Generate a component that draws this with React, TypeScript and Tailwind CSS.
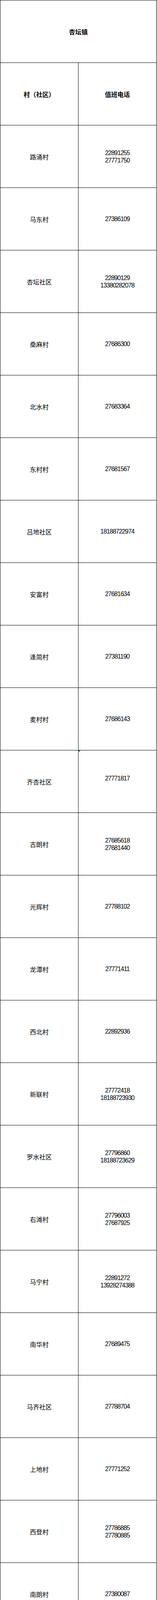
import React from 'react';

interface Row {
  name: string;
  phones: string[];
  flagged?: boolean;
}

const rows: Row[] = [
  { name: '路涌村', phones: ['22891255', '27771750'] },
  { name: '马东村', phones: ['27386109'] },
  { name: '杏坛社区', phones: ['22890129', '13380282078'] },
  { name: '桑麻村', phones: ['27686300'] },
  { name: '北水村', phones: ['27683364'] },
  { name: '东村村', phones: ['27681567'] },
  { name: '吕地社区', phones: ['18188722974'] },
  { name: '安富村', phones: ['27681634'] },
  { name: '逢简村', phones: ['27381190'] },
  { name: '麦村村', phones: ['27686143'] },
  { name: '齐杏社区', phones: ['27771817'], flagged: true },
  { name: '古朗村', phones: ['27685618', '27681440'] },
  { name: '光辉村', phones: ['27788102'] },
  { name: '龙潭村', phones: ['27771411'] },
  { name: '西北村', phones: ['22892936'] },
  { name: '新联村', phones: ['27772418', '18188723930'] },
  { name: '罗水社区', phones: ['27796860', '18188723629'] },
  { name: '右滩村', phones: ['27796003', '27687925'] },
  { name: '马宁村', phones: ['22891272', '13928274388'] },
  { name: '南华村', phones: ['27689475'] },
  { name: '马齐社区', phones: ['27788704'] },
  { name: '上地村', phones: ['27771252'] },
  { name: '西登村', phones: ['27786885', '27780885'] },
  { name: '南朗村', phones: ['27380087'] },
  { name: '雁园社区', phones: ['27775083'] },
  { name: '高赞村', phones: ['27782739', '27790111'] },
  { name: '昌教村', phones: ['27381608', '18029224705'] },
  { name: '光华村', phones: ['27686199'] },
  { name: '吉祐村', phones: ['27380863', '13326786002'] },
  { name: '海凌村', phones: ['27787020'] },
];

const cjk = "font-['Noto_Sans_CJK_SC',sans-serif]";
const cell = 'h-[160px] border-r border-b border-black flex items-center justify-center text-center';

export default function App() {
  return (
    <div className={`w-[402px] bg-white text-black text-[16px] ${cjk}`}>
      <div className="w-[401px] grid grid-cols-[200px_200px] border-l border-t border-black">
        {/* title */}
        <div className={`${cell} col-span-2 font-bold`}>杏坛镇</div>

        {/* header */}
        <div className={`${cell} font-bold`}>村（社区）</div>
        <div className={`${cell} font-bold`}>值班电话</div>

        {rows.map(r => (
          <React.Fragment key={r.name}>
            <div className={cell}>{r.name}</div>
            <div className={`${cell} relative`}>
              {r.flagged && (
                <span className="absolute top-0 -left-px w-0 h-0 border-t-[6px] border-r-[6px] border-t-[#008000] border-r-transparent" />
              )}
              <div
                className={`font-['Liberation_Sans',sans-serif] tracking-[-1px] leading-[19px] ${r.flagged ? 'pb-4' : ''}`}
              >
                {r.phones.map(p => (
                  <div key={p}>{p}</div>
                ))}
              </div>
            </div>
          </React.Fragment>
        ))}
      </div>
    </div>
  );
}
